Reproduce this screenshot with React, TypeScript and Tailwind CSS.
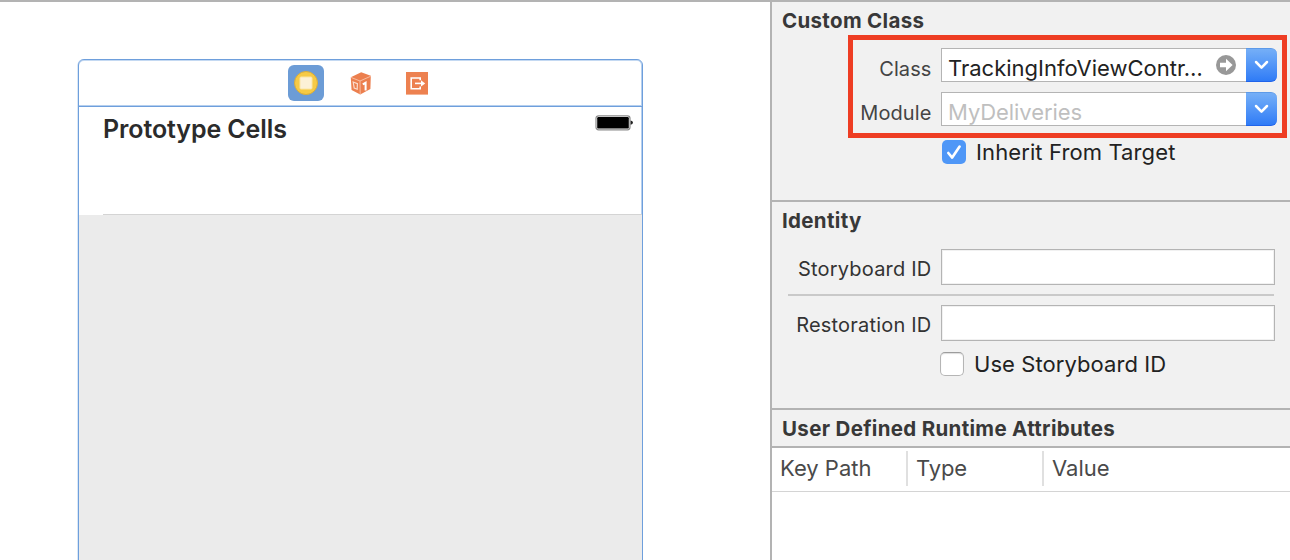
import React from "react";

function ControllerIcon() {
  return (
    <svg width="36" height="37" viewBox="0 0 36 37">
      <rect x="0" y="0" width="36" height="36" rx="6" fill="#6c9cd6" />
      <circle cx="18" cy="18" r="11.5" fill="#f6ca45" stroke="#d9ad3a" strokeWidth="1" />
      <rect x="12" y="12" width="12" height="12" rx="1" fill="#fcf1d6" stroke="#fae6a4" strokeWidth="1" />
    </svg>
  );
}

function CubeIcon() {
  return (
    <svg width="22" height="24" viewBox="0 0 22 24">
      <path d="M11.2 0.3 20.8 3.8 20.4 17 10.2 22.6 1.6 18 0.8 5.2Z" fill="#ec7f4e" />
      <path d="M1 5.4 10 9 20.8 4.2M10 9 10.2 22.4" fill="none" stroke="#f8c3aa" strokeWidth="0.9" />
      <path d="M3.2 10 7.4 11.6 7.2 17.2 4.2 16Z" fill="none" stroke="#fbdccd" strokeWidth="1.2" />
      <path d="M12.8 12.4 15.6 10.8V18.4" fill="none" stroke="#fff" strokeWidth="2" />
    </svg>
  );
}

function ExitIcon() {
  return (
    <svg width="22" height="23" viewBox="0 0 22 23">
      <rect width="22" height="22.6" fill="#ed8150" />
      <path d="M14.2 8.2V6H5.2V16.8H14.2V14.6" fill="none" stroke="#fff" strokeWidth="1.6" />
      <path d="M9 11.4H16" stroke="#fff" strokeWidth="1.6" />
      <path d="M15 8.2 19.2 11.4 15 14.6Z" fill="#fff" />
    </svg>
  );
}

function Battery() {
  return (
    <svg width="39" height="16" viewBox="0 0 39 16">
      <rect x="1" y="0.8" width="34" height="14" rx="2.5" fill="#fff" stroke="#8a8a8a" strokeWidth="1.2" />
      <rect x="2.2" y="2" width="31.6" height="11.6" rx="1.2" fill="#000" />
      <path d="M35.6 5.4Q38 5.8 38 7.6T35.6 9.8Z" fill="#222" />
    </svg>
  );
}

function ComboButton() {
  return (
    <div className="flex h-[34px] w-[31px] items-center justify-center rounded-r-[6px] border-t border-b border-t-[#5d9ae8] border-b-[#2064ea] bg-linear-to-b from-[#75aff7] to-[#2f7bf6]">
      <svg width="15" height="10" viewBox="0 0 15 10">
        <path d="M2 2 7.5 7.6 13 2" fill="none" stroke="#fff" strokeWidth="2.5" strokeLinecap="round" strokeLinejoin="round" />
      </svg>
    </div>
  );
}

function ComboRow({ label, children }: { label: string; children: React.ReactNode }) {
  return (
    <div className="flex h-[34px]">
      <div className="flex w-[78.5px] justify-end pt-[4px] text-[20px] leading-[34px] tracking-[0.1px] whitespace-nowrap text-[#444]">
        {label}
      </div>
      <div className="ml-[9.5px] flex h-[34px] w-[305px] items-center border border-r-0 border-[#b4b4b4] bg-white pl-[6px]">
        {children}
      </div>
      <ComboButton />
    </div>
  );
}

function FieldRow({ label }: { label: string }) {
  return (
    <div className="flex h-[36px]">
      <div className="flex w-[159.5px] justify-end pt-[3px] text-[20px] leading-[34px] tracking-[0.2px] whitespace-nowrap text-[#333]">
        {label}
      </div>
      <div className="ml-[9.5px] h-[36px] w-[334px] border border-[#b4b4b4] bg-white shadow-[inset_0_0_0_1px_#f1f1f1]" />
    </div>
  );
}

function SectionTitle({ children }: { children: React.ReactNode }) {
  return <h2 className="h-[36px] pl-[10px] text-[20.5px] leading-[38px] font-bold tracking-[0.32px] whitespace-nowrap text-[#383838]">{children}</h2>;
}

function Canvas() {
  return (
    <main className="w-[770px] bg-white pt-[57px] pl-[78px]">
      <div className="flex h-[520px] w-[565px] flex-col rounded-t-[6px] border border-[#6e9fdc] shadow-[inset_0_1px_0_#c4d9f2,inset_-1px_0_0_#b5cfee,-0.5px_0_0_#b5cfee]">
        <div className="flex h-[47px] items-start border-b border-[#6e9fdc] pt-[5px] pl-[209px] shadow-[inset_0_-1px_0_#b5cfee]">
          <ControllerIcon />
          <div className="pt-[6.5px] pl-[26px]">
            <CubeIcon />
          </div>
          <div className="pt-[6.5px] pl-[34px]">
            <ExitIcon />
          </div>
        </div>
        <div className="flex h-[107px] justify-between pr-[8px] pl-[24px]">
          <span className="pt-[5px] text-[25px] leading-[34px] font-semibold tracking-[-0.1px] text-[#2b2b2b]">Prototype Cells</span>
          <div className="pt-[8px]">
            <Battery />
          </div>
        </div>
        <div className="ml-[24px] h-px bg-[#d4d4d4]" />
        <div className="flex-1 bg-[#ebebeb]" />
      </div>
    </main>
  );
}

function Inspector() {
  return (
    <aside className="flex w-[520px] flex-col border-l-2 border-[#b3b3b3] bg-[#f1f1f1]">
      <section className="h-[200px] border-b-2 border-[#b3b3b3]">
        <div className="h-[33px]">
          <SectionTitle>Custom Class</SectionTitle>
        </div>
        <div className="ml-[76px] flex h-[103px] w-[439px] flex-col gap-[10px] border-5 border-[#ee3d23] pt-[8px]">
          <ComboRow label="Class">
            <span className="pt-[6px] text-[22px] leading-[30px] tracking-[0px] whitespace-nowrap text-[#222]">TrackingInfoViewContr…</span>
            <svg className="mr-[10px] mb-[1px] ml-auto shrink-0" width="20" height="20" viewBox="0 0 20 20">
              <circle cx="10" cy="10" r="10" fill="#989898" />
              <path d="M4 7.8H10V3.8L16.6 10 10 16.2V12.2H4Z" fill="#fff" />
            </svg>
          </ComboRow>
          <ComboRow label="Module">
            <span className="pt-[6px] text-[22px] leading-[30px] tracking-[-0.08px] whitespace-nowrap text-[#bfbfbf]">MyDeliveries</span>
          </ComboRow>
        </div>
        <div className="flex pt-[2px] pl-[170px]">
          <svg width="24" height="24" viewBox="0 0 24 24">
            <rect width="24" height="24" rx="5" fill="#4f97f7" />
            <path d="M6.3 13 10.2 17.6 17.6 6.6" fill="none" stroke="#fff" strokeWidth="2.6" strokeLinecap="round" strokeLinejoin="round" />
          </svg>
          <span className="ml-[10px] text-[22px] leading-[24px] tracking-[0.11px] whitespace-nowrap text-[#222]">Inherit From Target</span>
        </div>
      </section>
      <section className="h-[208px] border-b-2 border-[#b3b3b3]">
        <div className="h-[47px]">
          <SectionTitle>Identity</SectionTitle>
        </div>
        <FieldRow label="Storyboard ID" />
        <div className="mt-[9px] mb-[9px] ml-[16px] h-[2px] w-[486px] bg-[#c9c9c9]" />
        <FieldRow label="Restoration ID" />
        <div className="flex pt-[11px] pl-[168px]">
          <div className="h-[24px] w-[24px] rounded-[5px] border border-[#b5b5b5] border-t-[#9c9c9c] bg-white shadow-[inset_0_1px_1px_#ddd]" />
          <span className="ml-[10px] text-[22px] leading-[24px] tracking-[0.07px] whitespace-nowrap text-[#222]">Use Storyboard ID</span>
        </div>
      </section>
      <section className="flex flex-1 flex-col">
        <div className="h-[38px] border-b-2 border-[#b3b3b3]">
          <SectionTitle>User Defined Runtime Attributes</SectionTitle>
        </div>
        <div className="flex h-[44px] border-b border-[#d4d4d4] bg-white pt-[3px] text-[22px] leading-[34px] whitespace-nowrap text-[#4a4a4a]">
          <div className="h-[35px] w-[136px] border-r-2 border-[#e0e0e0] pl-[8px] tracking-[0px]">Key Path</div>
          <div className="h-[35px] w-[136px] border-r-2 border-[#e0e0e0] pl-[8px] tracking-[-0.1px]">Type</div>
          <div className="h-[35px] pl-[8px] tracking-[0px]">Value</div>
        </div>
        <div className="flex-1 bg-white" />
      </section>
    </aside>
  );
}

export default function App() {
  return (
    <div className="flex h-[560px] w-[1290px] overflow-hidden border-t-2 border-[#b3b3b3] bg-white font-['Inter','Liberation_Sans',sans-serif]">
      <Canvas />
      <Inspector />
    </div>
  );
}
